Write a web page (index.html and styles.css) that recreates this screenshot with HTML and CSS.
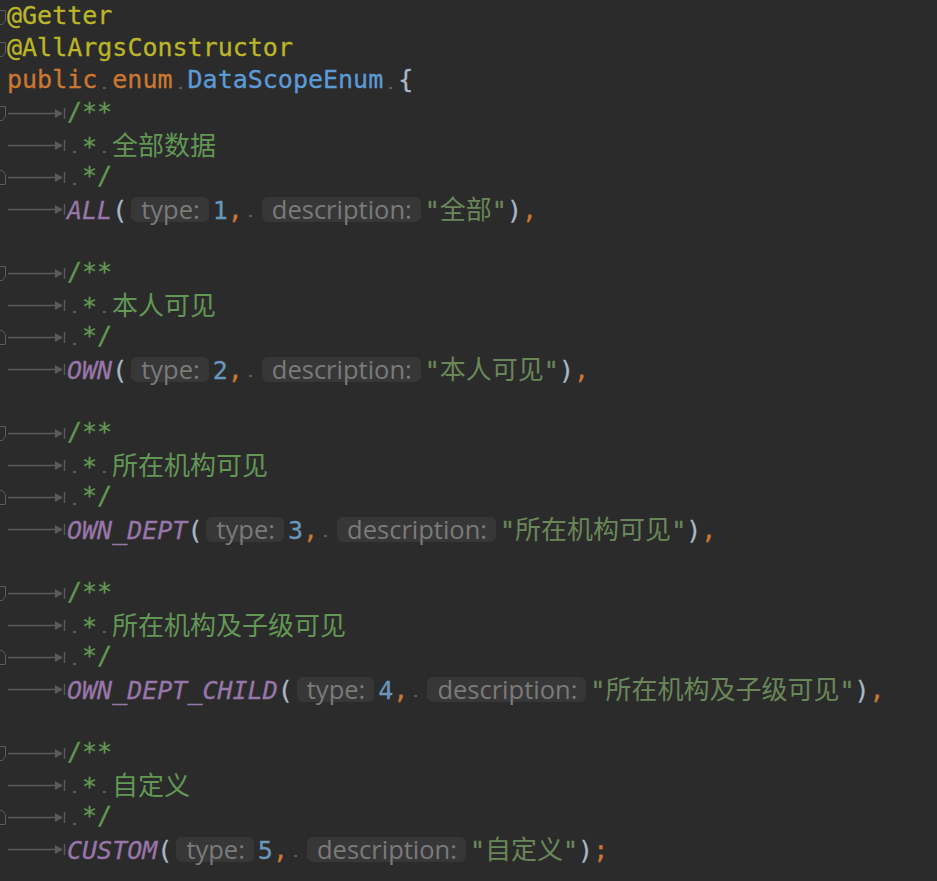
FILE: index.html
```html
<!DOCTYPE html>
<html>
<head>
<meta charset="utf-8">
<link rel="stylesheet" href="styles.css">
</head>
<body>
<div class="editor">
  <div class="line"><span class="gutter"><svg class="fold" viewBox="0 0 7 32"><path d="M-2 10.5 H5.5 V20.5 L2 24.5 H-2"/></svg></span><span class="code"><span class="ann">@Getter</span></span></div>
  <div class="line"><span class="gutter"><svg class="fold" viewBox="0 0 7 32"><path d="M-2 10.5 H5.5 V20.5 L2 24.5 H-2"/></svg></span><span class="code"><span class="ann">@AllArgsConstructor</span></span></div>
  <div class="line"><span class="gutter"></span><span class="code"><span class="kw">public</span><span class="sp"> </span><span class="kw">enum</span><span class="sp"> </span><span class="cls">DataScopeEnum</span><span class="sp"> </span><span class="pl">{</span></span></div>

  <div class="line"><span class="gutter"><svg class="fold" viewBox="0 0 7 32"><path d="M-2 10.5 H5.5 V20.5 L2 24.5 H-2"/></svg></span><span class="code"><span class="tab"><svg viewBox="0 0 60 32"><path class="tl" d="M1 17.5 H50"/><path class="th" d="M48 13 L56 17.5 L48 22 Z"/><path class="tl" d="M57.5 12 V23"/></svg></span><span class="doc">/**</span></span></div>
  <div class="line"><span class="gutter"></span><span class="code"><span class="tab"><svg viewBox="0 0 60 32"><path class="tl" d="M1 17.5 H50"/><path class="th" d="M48 13 L56 17.5 L48 22 Z"/><path class="tl" d="M57.5 12 V23"/></svg></span><span class="sp"> </span><span class="doc">*</span><span class="sp"> </span><span class="doc cjk">全部数据</span></span></div>
  <div class="line"><span class="gutter"><svg class="fold" viewBox="0 0 7 32"><path d="M-2 24.5 H5.5 V14.5 L2 10.5 H-2"/></svg></span><span class="code"><span class="tab"><svg viewBox="0 0 60 32"><path class="tl" d="M1 17.5 H50"/><path class="th" d="M48 13 L56 17.5 L48 22 Z"/><path class="tl" d="M57.5 12 V23"/></svg></span><span class="sp"> </span><span class="doc">*/</span></span></div>
  <div class="line"><span class="gutter"></span><span class="code"><span class="tab"><svg viewBox="0 0 60 32"><path class="tl" d="M1 17.5 H50"/><path class="th" d="M48 13 L56 17.5 L48 22 Z"/><path class="tl" d="M57.5 12 V23"/></svg></span><span class="const">ALL</span><span class="pl">(</span><span class="hint">type:</span><span class="num">1</span><span class="kw">,</span><span class="sp"> </span><span class="hint">description:</span><span class="str">"<span class="cjk">全部</span>"</span><span class="pl">)</span><span class="kw">,</span></span></div>
  <div class="line"></div>

  <div class="line"><span class="gutter"><svg class="fold" viewBox="0 0 7 32"><path d="M-2 10.5 H5.5 V20.5 L2 24.5 H-2"/></svg></span><span class="code"><span class="tab"><svg viewBox="0 0 60 32"><path class="tl" d="M1 17.5 H50"/><path class="th" d="M48 13 L56 17.5 L48 22 Z"/><path class="tl" d="M57.5 12 V23"/></svg></span><span class="doc">/**</span></span></div>
  <div class="line"><span class="gutter"></span><span class="code"><span class="tab"><svg viewBox="0 0 60 32"><path class="tl" d="M1 17.5 H50"/><path class="th" d="M48 13 L56 17.5 L48 22 Z"/><path class="tl" d="M57.5 12 V23"/></svg></span><span class="sp"> </span><span class="doc">*</span><span class="sp"> </span><span class="doc cjk">本人可见</span></span></div>
  <div class="line"><span class="gutter"><svg class="fold" viewBox="0 0 7 32"><path d="M-2 24.5 H5.5 V14.5 L2 10.5 H-2"/></svg></span><span class="code"><span class="tab"><svg viewBox="0 0 60 32"><path class="tl" d="M1 17.5 H50"/><path class="th" d="M48 13 L56 17.5 L48 22 Z"/><path class="tl" d="M57.5 12 V23"/></svg></span><span class="sp"> </span><span class="doc">*/</span></span></div>
  <div class="line"><span class="gutter"></span><span class="code"><span class="tab"><svg viewBox="0 0 60 32"><path class="tl" d="M1 17.5 H50"/><path class="th" d="M48 13 L56 17.5 L48 22 Z"/><path class="tl" d="M57.5 12 V23"/></svg></span><span class="const">OWN</span><span class="pl">(</span><span class="hint">type:</span><span class="num">2</span><span class="kw">,</span><span class="sp"> </span><span class="hint">description:</span><span class="str">"<span class="cjk">本人可见</span>"</span><span class="pl">)</span><span class="kw">,</span></span></div>
  <div class="line"></div>

  <div class="line"><span class="gutter"><svg class="fold" viewBox="0 0 7 32"><path d="M-2 10.5 H5.5 V20.5 L2 24.5 H-2"/></svg></span><span class="code"><span class="tab"><svg viewBox="0 0 60 32"><path class="tl" d="M1 17.5 H50"/><path class="th" d="M48 13 L56 17.5 L48 22 Z"/><path class="tl" d="M57.5 12 V23"/></svg></span><span class="doc">/**</span></span></div>
  <div class="line"><span class="gutter"></span><span class="code"><span class="tab"><svg viewBox="0 0 60 32"><path class="tl" d="M1 17.5 H50"/><path class="th" d="M48 13 L56 17.5 L48 22 Z"/><path class="tl" d="M57.5 12 V23"/></svg></span><span class="sp"> </span><span class="doc">*</span><span class="sp"> </span><span class="doc cjk">所在机构可见</span></span></div>
  <div class="line"><span class="gutter"><svg class="fold" viewBox="0 0 7 32"><path d="M-2 24.5 H5.5 V14.5 L2 10.5 H-2"/></svg></span><span class="code"><span class="tab"><svg viewBox="0 0 60 32"><path class="tl" d="M1 17.5 H50"/><path class="th" d="M48 13 L56 17.5 L48 22 Z"/><path class="tl" d="M57.5 12 V23"/></svg></span><span class="sp"> </span><span class="doc">*/</span></span></div>
  <div class="line"><span class="gutter"></span><span class="code"><span class="tab"><svg viewBox="0 0 60 32"><path class="tl" d="M1 17.5 H50"/><path class="th" d="M48 13 L56 17.5 L48 22 Z"/><path class="tl" d="M57.5 12 V23"/></svg></span><span class="const">OWN_DEPT</span><span class="pl">(</span><span class="hint">type:</span><span class="num">3</span><span class="kw">,</span><span class="sp"> </span><span class="hint">description:</span><span class="str">"<span class="cjk">所在机构可见</span>"</span><span class="pl">)</span><span class="kw">,</span></span></div>
  <div class="line"></div>

  <div class="line"><span class="gutter"><svg class="fold" viewBox="0 0 7 32"><path d="M-2 10.5 H5.5 V20.5 L2 24.5 H-2"/></svg></span><span class="code"><span class="tab"><svg viewBox="0 0 60 32"><path class="tl" d="M1 17.5 H50"/><path class="th" d="M48 13 L56 17.5 L48 22 Z"/><path class="tl" d="M57.5 12 V23"/></svg></span><span class="doc">/**</span></span></div>
  <div class="line"><span class="gutter"></span><span class="code"><span class="tab"><svg viewBox="0 0 60 32"><path class="tl" d="M1 17.5 H50"/><path class="th" d="M48 13 L56 17.5 L48 22 Z"/><path class="tl" d="M57.5 12 V23"/></svg></span><span class="sp"> </span><span class="doc">*</span><span class="sp"> </span><span class="doc cjk">所在机构及子级可见</span></span></div>
  <div class="line"><span class="gutter"><svg class="fold" viewBox="0 0 7 32"><path d="M-2 24.5 H5.5 V14.5 L2 10.5 H-2"/></svg></span><span class="code"><span class="tab"><svg viewBox="0 0 60 32"><path class="tl" d="M1 17.5 H50"/><path class="th" d="M48 13 L56 17.5 L48 22 Z"/><path class="tl" d="M57.5 12 V23"/></svg></span><span class="sp"> </span><span class="doc">*/</span></span></div>
  <div class="line"><span class="gutter"></span><span class="code"><span class="tab"><svg viewBox="0 0 60 32"><path class="tl" d="M1 17.5 H50"/><path class="th" d="M48 13 L56 17.5 L48 22 Z"/><path class="tl" d="M57.5 12 V23"/></svg></span><span class="const">OWN_DEPT_CHILD</span><span class="pl">(</span><span class="hint">type:</span><span class="num">4</span><span class="kw">,</span><span class="sp"> </span><span class="hint">description:</span><span class="str">"<span class="cjk">所在机构及子级可见</span>"</span><span class="pl">)</span><span class="kw">,</span></span></div>
  <div class="line"></div>

  <div class="line"><span class="gutter"><svg class="fold" viewBox="0 0 7 32"><path d="M-2 10.5 H5.5 V20.5 L2 24.5 H-2"/></svg></span><span class="code"><span class="tab"><svg viewBox="0 0 60 32"><path class="tl" d="M1 17.5 H50"/><path class="th" d="M48 13 L56 17.5 L48 22 Z"/><path class="tl" d="M57.5 12 V23"/></svg></span><span class="doc">/**</span></span></div>
  <div class="line"><span class="gutter"></span><span class="code"><span class="tab"><svg viewBox="0 0 60 32"><path class="tl" d="M1 17.5 H50"/><path class="th" d="M48 13 L56 17.5 L48 22 Z"/><path class="tl" d="M57.5 12 V23"/></svg></span><span class="sp"> </span><span class="doc">*</span><span class="sp"> </span><span class="doc cjk">自定义</span></span></div>
  <div class="line"><span class="gutter"><svg class="fold" viewBox="0 0 7 32"><path d="M-2 24.5 H5.5 V14.5 L2 10.5 H-2"/></svg></span><span class="code"><span class="tab"><svg viewBox="0 0 60 32"><path class="tl" d="M1 17.5 H50"/><path class="th" d="M48 13 L56 17.5 L48 22 Z"/><path class="tl" d="M57.5 12 V23"/></svg></span><span class="sp"> </span><span class="doc">*/</span></span></div>
  <div class="line"><span class="gutter"></span><span class="code"><span class="tab"><svg viewBox="0 0 60 32"><path class="tl" d="M1 17.5 H50"/><path class="th" d="M48 13 L56 17.5 L48 22 Z"/><path class="tl" d="M57.5 12 V23"/></svg></span><span class="const">CUSTOM</span><span class="pl">(</span><span class="hint">type:</span><span class="num">5</span><span class="kw">,</span><span class="sp"> </span><span class="hint">description:</span><span class="str">"<span class="cjk">自定义</span>"</span><span class="pl">)</span><span class="kw">;</span></span></div>
</div>
</body>
</html>
```

FILE: styles.css
```css
html, body {
  margin: 0;
  padding: 0;
  background: #2b2b2b;
}

.editor {
  background: #2b2b2b;
  width: 937px;
  height: 881px;
  overflow: hidden;
  font-family: "DejaVu Sans Mono", "Noto Sans CJK SC", monospace;
  font-size: 25px;
  color: #a9b7c6;
}

.line {
  display: flex;
  height: 32px;
  line-height: 32px;
  white-space: pre;
}

.gutter {
  flex: none;
  width: 7px;
  height: 32px;
}

.fold {
  display: block;
  width: 7px;
  height: 32px;
  overflow: visible;
}

.fold path {
  fill: none;
  stroke: #5b5b5b;
  stroke-width: 1;
}

.code {
  display: block;
  height: 32px;
  -webkit-text-stroke: 0.3px currentColor;
}

.tab {
  display: inline-block;
  width: 60px;
  height: 32px;
  vertical-align: top;
}

.tab svg {
  display: block;
  width: 60px;
  height: 32px;
}

.tl {
  stroke: #5a5a5a;
  stroke-width: 1.4;
  fill: none;
}

.th {
  fill: #5a5a5a;
}

.sp {
  display: inline-block;
  width: 15px;
  height: 32px;
  vertical-align: top;
  background: radial-gradient(circle at 7.5px 24px, #5e5e5e 0 1.1px, transparent 1.4px);
}

.ann { color: #bbb529; }
.kw { color: #cc7832; }
.cls { color: #5c9bd6; }
.pl { color: #a9b7c6; }
.doc { color: #629755; }
.const { color: #9876aa; font-style: italic; }
.num { color: #6897bb; }
.str { color: #6a8759; }

.cjk {
  font-family: "Noto Sans CJK SC", sans-serif;
  font-size: 26px;
  -webkit-text-stroke: 0;
}

.hint {
  display: inline-block;
  height: 24px;
  line-height: 24px;
  padding: 0 9px 1px 10px;
  margin: 5px 4px 0 4px;
  border-radius: 6px;
  background: #373737;
  color: #7a7a7a;
  font-family: "Open Sans", sans-serif;
  font-size: 25.5px;
  vertical-align: top;
  -webkit-text-stroke: 0;
}
```
